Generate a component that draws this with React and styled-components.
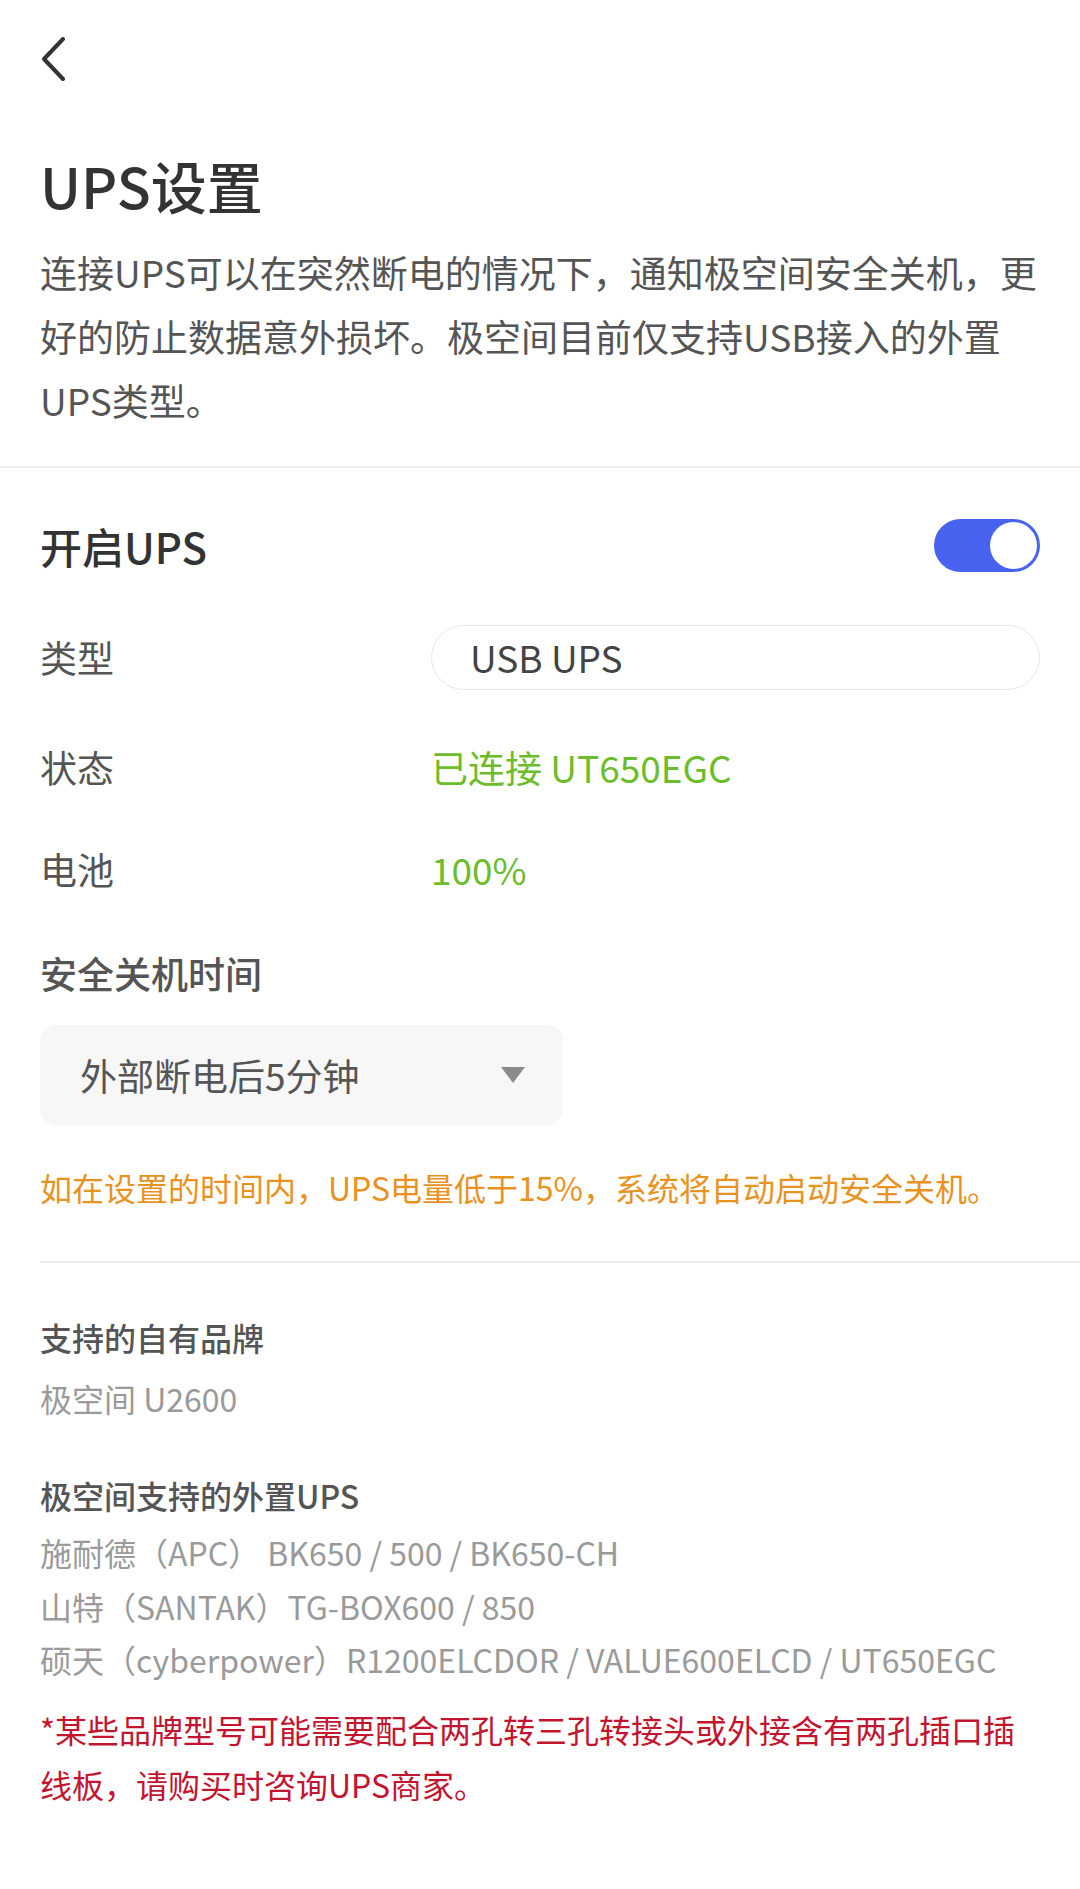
import React, { useState } from "react";
import styled, { createGlobalStyle } from "styled-components";

const GlobalStyle = createGlobalStyle`
  html, body {
    margin: 0;
    padding: 0;
    background: #fff;
  }
  body {
    font-family: "Noto Sans CJK SC", "Noto Sans", sans-serif;
    color: #333;
  }
`;

const Page = styled.div`
  width: 1080px;
  min-height: 1889px;
  background: #fff;
  box-sizing: border-box;
`;

const Header = styled.div`
  padding: 37px 40px 34px;
  border-bottom: 2px solid #ededed;
`;

const BackButton = styled.button`
  display: block;
  width: 30px;
  height: 44px;
  padding: 0;
  border: none;
  background: none;
  cursor: pointer;
`;

const Title = styled.h1`
  margin: 70px 0 0;
  font-size: 56px;
  font-weight: 500;
  line-height: 67px;
  color: #333;
`;

const Description = styled.p`
  margin: 22px 0 0;
  font-size: 37px;
  line-height: 64px;
  color: #555;
  white-space: pre-line;
`;

const Settings = styled.div`
  padding: 24px 40px 0;
`;

const Row = styled.div`
  display: grid;
  grid-template-columns: 391px 1fr;
  align-items: center;
  height: ${(p) => p.h}px;
`;

const SwitchRow = styled.div`
  display: flex;
  justify-content: space-between;
  align-items: center;
  height: 106px;
`;

const SwitchLabel = styled.span`
  font-size: 42px;
  font-weight: 500;
  color: #333;
`;

const Label = styled.span`
  font-size: 37px;
  color: #555;
`;

const Value = styled.span`
  font-size: 37px;
  color: ${(p) => p.color || "#444"};
`;

const Toggle = styled.button`
  width: 106px;
  height: 53px;
  border-radius: 27px;
  border: none;
  padding: 3px;
  background: ${(p) => (p.on ? "#4863f0" : "#d0d0d0")};
  display: flex;
  justify-content: ${(p) => (p.on ? "flex-end" : "flex-start")};
  align-items: center;
  cursor: pointer;
  box-sizing: border-box;
`;

const Knob = styled.span`
  width: 47px;
  height: 47px;
  border-radius: 50%;
  background: #fff;
`;

const Pill = styled.div`
  height: 65px;
  border: 1.5px solid #e6e6e6;
  border-radius: 33px;
  display: flex;
  align-items: center;
  padding-left: 38px;
  box-sizing: border-box;
  font-size: 37px;
  color: #444;
`;

const SubHeading = styled.div`
  margin-top: 27px;
  font-size: 37px;
  font-weight: 500;
  line-height: 52px;
  color: #555;
`;

const Select = styled.div`
  margin-top: 26px;
  width: 523px;
  height: 100px;
  border-radius: 16px;
  background: #f7f7f7;
  display: flex;
  align-items: center;
  justify-content: space-between;
  padding: 0 38px 0 40px;
  box-sizing: border-box;
  font-size: 37px;
  color: #555;
`;

const Caret = styled.span`
  width: 0;
  height: 0;
  border-left: 12px solid transparent;
  border-right: 12px solid transparent;
  border-top: 16px solid #8a8a8a;
`;

const Warning = styled.div`
  margin-top: 38px;
  font-size: 32px;
  line-height: 48px;
  color: #e8921f;
`;

const Divider = styled.div`
  margin: 50px 0 0 40px;
  height: 2px;
  background: #ededed;
`;

const Brands = styled.div`
  padding: 50px 40px 80px;
`;

const BrandHeading = styled.div`
  margin-top: ${(p) => p.top || 0}px;
  font-size: 32px;
  font-weight: 500;
  line-height: 48px;
  color: #555;
`;

const BrandLine = styled.div`
  font-size: 32px;
  line-height: ${(p) => p.lh || 53.5}px;
  margin-top: ${(p) => p.top || 0}px;
  color: #9a9a9a;
  white-space: nowrap;
`;

const Note = styled.div`
  margin-top: 15px;
  font-size: 32px;
  line-height: 55px;
  color: #c2152f;
  white-space: pre-line;
`;

const ChevronLeft = () => (
  <svg width="30" height="44" viewBox="0 0 30 44">
    <polyline
      points="23,2 4,22 23,42"
      fill="none"
      stroke="#333"
      strokeWidth="4"
      strokeLinecap="round"
      strokeLinejoin="round"
    />
  </svg>
);

const statusRows = [
  { label: "状态", value: "已连接 UT650EGC", h: 102 },
  { label: "电池", value: "100%", h: 102 },
];

const externalUps = [
  "施耐德（APC） BK650 / 500 / BK650-CH",
  "山特（SANTAK）TG-BOX600 / 850",
  "硕天（cyberpower）R1200ELCDOR / VALUE600ELCD / UT650EGC",
];

export default function App() {
  const [enabled, setEnabled] = useState(true);

  return (
    <Page>
      <GlobalStyle />
      <Header>
        <BackButton aria-label="返回">
          <ChevronLeft />
        </BackButton>
        <Title>UPS设置</Title>
        <Description>
          {"连接UPS可以在突然断电的情况下，通知极空间安全关机，更\n好的防止数据意外损坏。极空间目前仅支持USB接入的外置\nUPS类型。"}
        </Description>
      </Header>

      <Settings>
        <SwitchRow>
          <SwitchLabel>开启UPS</SwitchLabel>
          <Toggle on={enabled ? 1 : 0} onClick={() => setEnabled(!enabled)}>
            <Knob />
          </Toggle>
        </SwitchRow>
        <Row h={118}>
          <Label>类型</Label>
          <Pill>USB UPS</Pill>
        </Row>
        {statusRows.map((r) => (
          <Row h={r.h} key={r.label}>
            <Label>{r.label}</Label>
            <Value color="#6cbd2b">{r.value}</Value>
          </Row>
        ))}
        <SubHeading>安全关机时间</SubHeading>
        <Select>
          外部断电后5分钟
          <Caret />
        </Select>
        <Warning>如在设置的时间内，UPS电量低于15%，系统将自动启动安全关机。</Warning>
      </Settings>

      <Divider />

      <Brands>
        <BrandHeading>支持的自有品牌</BrandHeading>
        <BrandLine lh={48} top={13}>极空间 U2600</BrandLine>
        <BrandHeading top={49}>极空间支持的外置UPS</BrandHeading>
        <div style={{ marginTop: 7 }}>
          {externalUps.map((line) => (
            <BrandLine key={line}>{line}</BrandLine>
          ))}
        </div>
        <Note>
          {"*某些品牌型号可能需要配合两孔转三孔转接头或外接含有两孔插口插\n线板，请购买时咨询UPS商家。"}
        </Note>
      </Brands>
    </Page>
  );
}
